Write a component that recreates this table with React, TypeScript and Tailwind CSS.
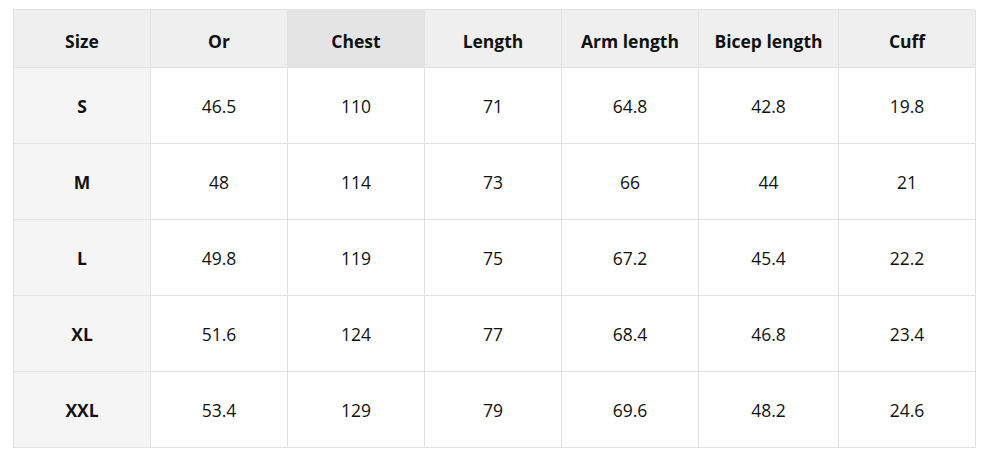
import React from "react";

const headers = ["Size", "Or", "Chest", "Length", "Arm length", "Bicep length", "Cuff"];
const rows = [
  ["S", "46.5", "110", "71", "64.8", "42.8", "19.8"],
  ["M", "48", "114", "73", "66", "44", "21"],
  ["L", "49.8", "119", "75", "67.2", "45.4", "22.2"],
  ["XL", "51.6", "124", "77", "68.4", "46.8", "23.4"],
  ["XXL", "53.4", "129", "79", "69.6", "48.2", "24.6"],
];

export default function App() {
  return (
    <div
      className="w-[989px] h-[457px] bg-white pt-[9px] pl-[13px]"
      style={{ fontFamily: '"Open Sans", "Noto Sans", sans-serif' }}
    >
      <div className="grid grid-cols-[137px_137px_137px_137px_137px_140px_137px] grid-rows-[58px_76px_76px_76px_76px_76px] w-[962px] border-l border-t border-[#e2e2e2] text-[17.5px] text-[#111]">
        {headers.map((h, i) => (
          <div
            key={h}
            className={`flex items-center justify-center pt-[5px] font-bold border-r border-b border-[#e2e2e2] ${
              i === 2 ? "bg-[#e4e4e4]" : "bg-[#efefef]"
            }`}
          >
            {h}
          </div>
        ))}
        {rows.map((r) =>
          r.map((c, i) => (
            <div
              key={r[0] + i}
              className={`flex items-center justify-center pt-[2px] border-r border-b border-[#e2e2e2] ${
                i === 0 ? "bg-[#f5f5f5] font-bold" : "bg-white"
              }`}
            >
              {c}
            </div>
          ))
        )}
      </div>
    </div>
  );
}
